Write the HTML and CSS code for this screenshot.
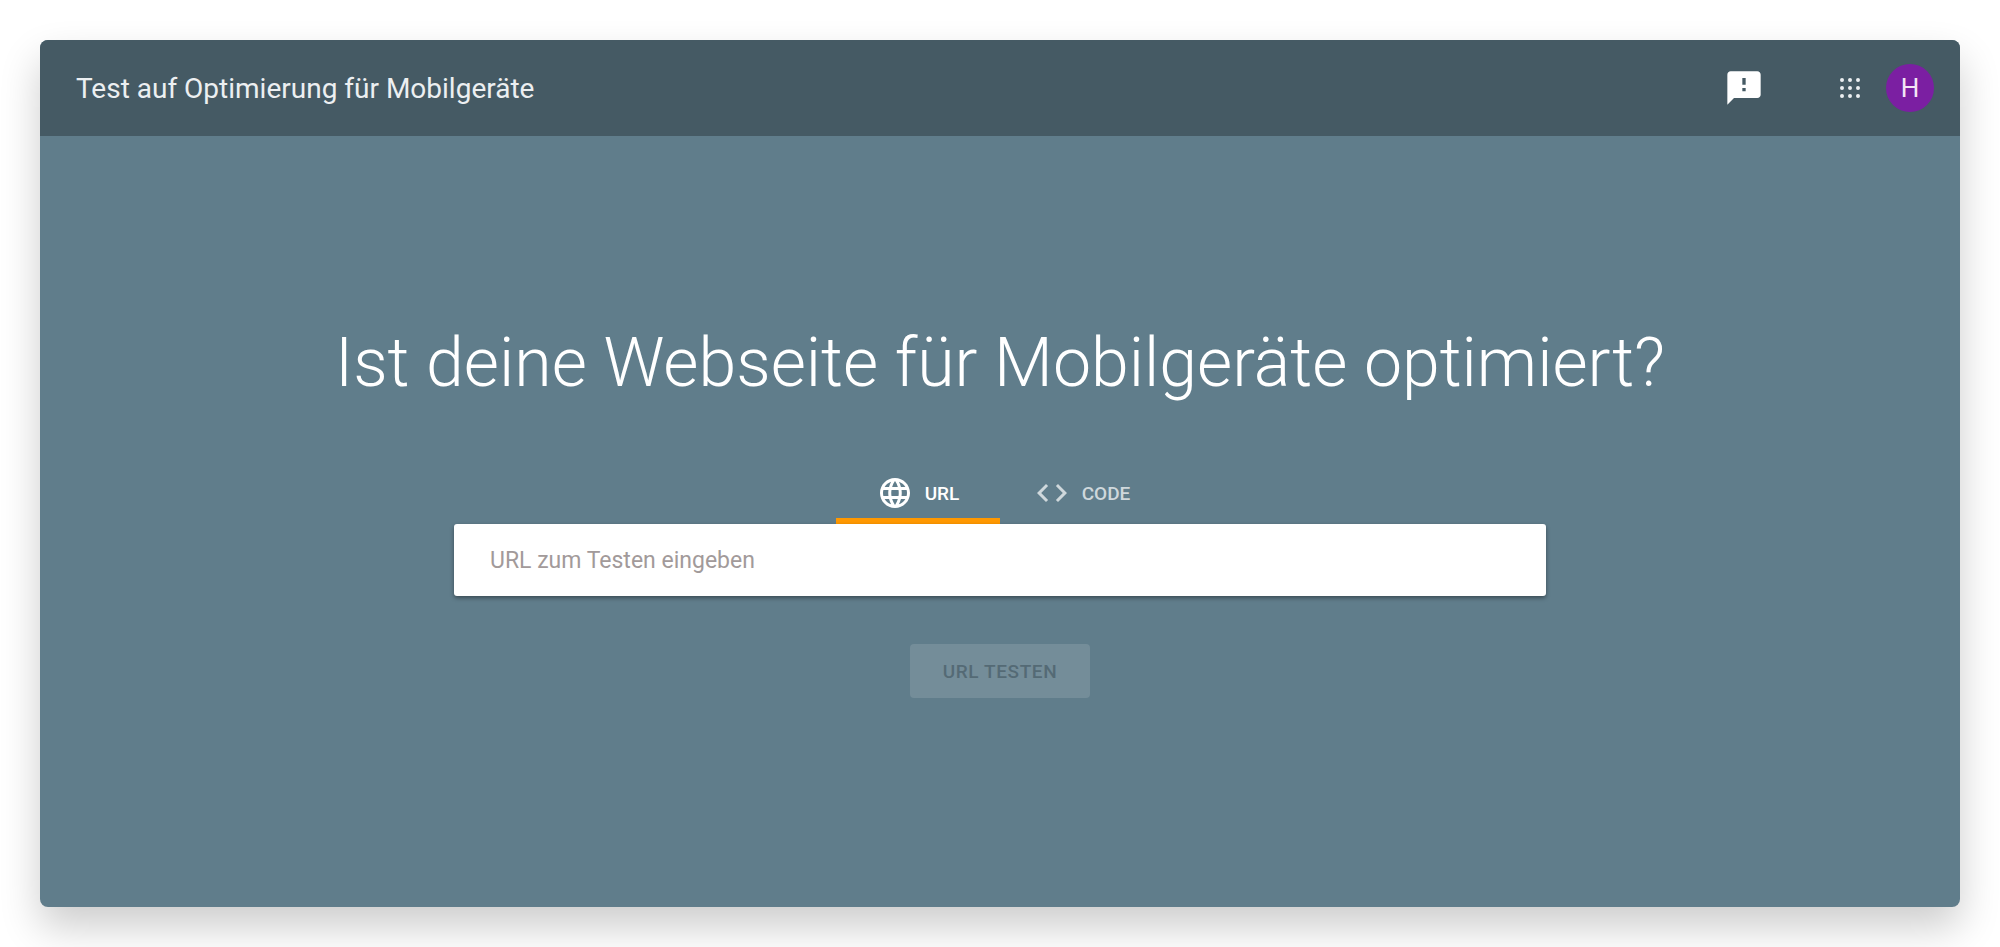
FILE: index.html
```html
<!DOCTYPE html>
<html lang="de">
<head>
  <meta charset="UTF-8">
  <meta name="viewport" content="width=device-width, initial-scale=1.0">
  <title>Test auf Optimierung für Mobilgeräte</title>
  <link rel="stylesheet" href="styles.css">
</head>
<body>
  <div class="card">
    <header class="topbar">
      <div class="topbar-title">Test auf Optimierung für Mobilgeräte</div>
      <svg class="feedback-icon" viewBox="0 0 24 24" width="40" height="40">
        <path d="M20 2H4c-1.1 0-1.99.9-1.99 2L2 22l4-4h14c1.1 0 2-.9 2-2V4c0-1.1-.9-2-2-2zm-7 12h-2v-2h2v2zm0-4h-2V6h2v4z"/>
      </svg>
      <svg class="apps-icon" viewBox="0 0 24 24" width="24" height="24">
        <path d="M2 4a2 2 0 1 0 4 0 2 2 0 1 0-4 0M10 4a2 2 0 1 0 4 0 2 2 0 1 0-4 0M18 4a2 2 0 1 0 4 0 2 2 0 1 0-4 0M2 12a2 2 0 1 0 4 0 2 2 0 1 0-4 0M10 12a2 2 0 1 0 4 0 2 2 0 1 0-4 0M18 12a2 2 0 1 0 4 0 2 2 0 1 0-4 0M2 20a2 2 0 1 0 4 0 2 2 0 1 0-4 0M10 20a2 2 0 1 0 4 0 2 2 0 1 0-4 0M18 20a2 2 0 1 0 4 0 2 2 0 1 0-4 0"/>
      </svg>
      <div class="avatar">H</div>
    </header>

    <main class="hero">
      <h1>Ist deine Webseite für Mobilgeräte optimiert?</h1>
      <div class="tabs">
        <div class="tab active">
          <svg viewBox="0 0 24 24" width="36" height="36">
            <path d="M11.99 2C6.47 2 2 6.48 2 12s4.47 10 9.99 10C17.52 22 22 17.52 22 12S17.52 2 11.99 2zm6.93 6h-2.95c-.32-1.25-.78-2.45-1.38-3.56 1.84.63 3.37 1.91 4.33 3.56zM12 4.04c.83 1.2 1.48 2.53 1.91 3.96h-3.82c.43-1.43 1.08-2.76 1.91-3.96zM4.26 14C4.1 13.36 4 12.69 4 12s.1-1.36.26-2h3.38c-.08.66-.14 1.32-.14 2 0 .68.06 1.34.14 2H4.26zm.82 2h2.95c.32 1.25.78 2.45 1.38 3.56-1.84-.63-3.37-1.9-4.33-3.56zm2.95-8H5.08c.96-1.66 2.49-2.93 4.33-3.56C8.81 5.55 8.35 6.75 8.03 8zM12 19.96c-.83-1.2-1.48-2.53-1.91-3.96h3.82c-.43 1.43-1.08 2.76-1.91 3.96zM14.34 14H9.66c-.09-.66-.16-1.32-.16-2 0-.68.07-1.35.16-2h4.68c.09.65.16 1.32.16 2 0 .68-.07 1.34-.16 2zm.25 5.56c.6-1.11 1.06-2.31 1.38-3.56h2.95c-.96 1.65-2.49 2.93-4.33 3.56zM16.36 14c.08-.66.14-1.32.14-2 0-.68-.06-1.34-.14-2h3.38c.16.64.26 1.31.26 2s-.1 1.36-.26 2h-3.38z"/>
          </svg>
          <span>URL</span>
        </div>
        <div class="tab">
          <svg viewBox="0 0 24 24" width="36" height="36">
            <path d="M9.4 16.6L4.8 12l4.6-4.6L8 6l-6 6 6 6 1.4-1.4zm5.2 0l4.6-4.6-4.6-4.6L16 6l6 6-6 6-1.4-1.4z"/>
          </svg>
          <span>CODE</span>
        </div>
      </div>
      <input class="url-input" type="text" placeholder="URL zum Testen eingeben">
      <button class="test-btn" disabled>URL TESTEN</button>
    </main>
  </div>
</body>
</html>
```

FILE: styles.css
```css
* {
  box-sizing: border-box;
}

html, body {
  height: 100%;
}

body {
  margin: 0;
  padding: 40px;
  background: #ffffff;
  font-family: Roboto, "Liberation Sans", sans-serif;
  overflow: hidden;
}

.card {
  height: 867px;
  display: flex;
  flex-direction: column;
  border-radius: 8px;
  overflow: hidden;
  background: #607d8b;
}

/* overflow hidden clips nothing outside, the shadow sits on the box itself */
.card {
  box-shadow: 0 20px 40px rgba(0, 0, 0, 0.2);
}

.topbar {
  height: 96px;
  flex-shrink: 0;
  display: flex;
  align-items: center;
  padding: 0 26px 0 36px;
  background: #455a64;
}

.topbar-title {
  flex: 1;
  font-size: 28px;
  color: #eceff1;
}

.feedback-icon {
  fill: #ffffff;
  margin-right: 74px;
}

.apps-icon {
  fill: #eceff1;
  margin-right: 24px;
}

.avatar {
  width: 48px;
  height: 48px;
  border-radius: 50%;
  background: #7b1fa2;
  color: #f3e5f5;
  font-size: 26px;
  display: flex;
  align-items: center;
  justify-content: center;
}

.hero {
  flex: 1;
  display: flex;
  flex-direction: column;
  align-items: center;
  padding-top: 180px;
}

.hero h1 {
  margin: 0;
  height: 94px;
  line-height: 94px;
  font-size: 68px;
  font-weight: 300;
  color: #ffffff;
}

.tabs {
  display: flex;
  justify-content: center;
  margin-top: 58px;
}

.tab {
  width: 164px;
  height: 56px;
  display: flex;
  align-items: center;
  justify-content: center;
  gap: 12px;
  padding-bottom: 6px;
  font-size: 19px;
  font-weight: 500;
  color: #cfd8dc;
  fill: #cfd8dc;
}

.tab.active {
  color: #ffffff;
  fill: #ffffff;
  border-bottom: 6px solid #ff9800;
  padding-bottom: 0;
}

.url-input {
  width: 1092px;
  height: 72px;
  flex-shrink: 0;
  padding: 0 36px;
  border: none;
  border-radius: 3px;
  background: #ffffff;
  font-family: inherit;
  font-size: 23px;
  box-shadow: 0 2px 4px rgba(0, 0, 0, 0.4);
  outline: none;
}

.url-input::placeholder {
  color: #a29a9a;
  opacity: 1;
}

.test-btn {
  width: 180px;
  height: 54px;
  margin-top: 48px;
  border: none;
  border-radius: 4px;
  background: #748d99;
  color: #546a75;
  font-family: inherit;
  font-size: 19px;
  font-weight: 500;
  letter-spacing: 0.6px;
}
```
